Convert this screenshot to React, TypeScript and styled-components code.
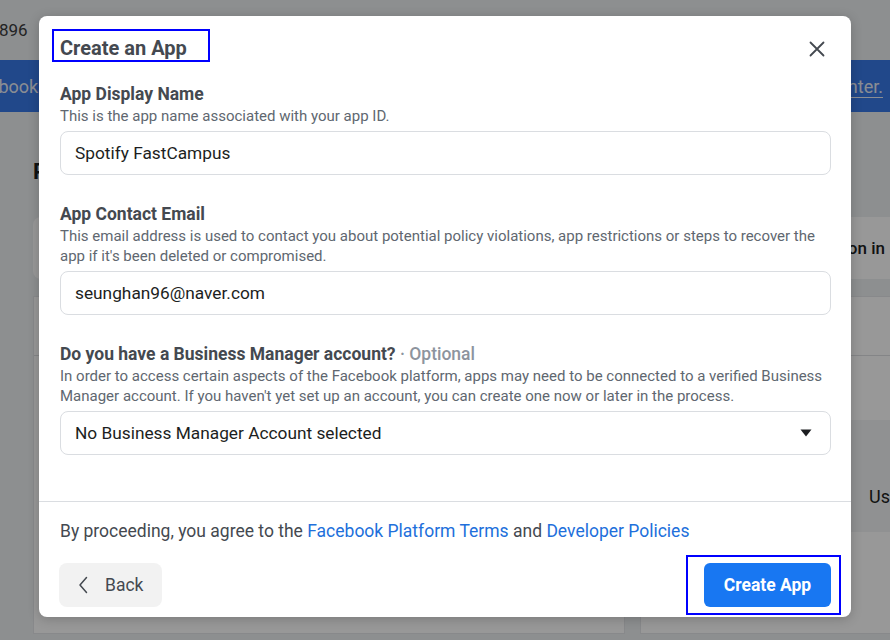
import React from "react";
import styled, { createGlobalStyle } from "styled-components";

const GlobalStyle = createGlobalStyle`
  html, body {
    margin: 0;
    padding: 0;
    width: 890px;
    height: 640px;
    overflow: hidden;
    font-family: Roboto, "Liberation Sans", Arial, sans-serif;
  }
`;

export default function App() {
  return (
    <>
      <GlobalStyle />
      <Screen>
        <Page>
          <TopBar>
            <Counter>896</Counter>
            <Pill />
          </TopBar>
          <Banner>
            <BannerText>Facebook</BannerText>
            <BannerLink>Help Center.</BannerLink>
          </Banner>
          <Content>
            <PageTitle>Products</PageTitle>
            <NoticeCard>
              <NoticeText>Learn more about permission in</NoticeText>
            </NoticeCard>
            <PanelRow>
              <Panel>
                <PanelHead />
                <PanelBody />
              </Panel>
              <Panel>
                <PanelHead />
                <PanelGap />
                <PanelBand>
                  <BandText>Use</BandText>
                </PanelBand>
              </Panel>
            </PanelRow>
          </Content>
        </Page>

        <Overlay />

        <Dialog>
          <Header>
            <Title>Create an App</Title>
            <CloseButton aria-label="Close">
              <svg width="16" height="16" viewBox="0 0 16 16">
                <path
                  d="M1.5 1.5 L14.5 14.5 M14.5 1.5 L1.5 14.5"
                  stroke="#444950"
                  strokeWidth="1.8"
                  strokeLinecap="round"
                />
              </svg>
            </CloseButton>
          </Header>

          <Body>
            <Field>
              <Label>App Display Name</Label>
              <Hint>This is the app name associated with your app ID.</Hint>
              <Input>Spotify FastCampus</Input>
            </Field>

            <Field>
              <Label>App Contact Email</Label>
              <Hint>
                This email address is used to contact you about potential
                policy violations, app restrictions or steps to recover the
                app if it's been deleted or compromised.
              </Hint>
              <Input>seunghan96@naver.com</Input>
            </Field>

            <Field>
              <Label>
                Do you have a Business Manager account?
                <Optional> · Optional</Optional>
              </Label>
              <Hint>
                In order to access certain aspects of the Facebook platform,
                apps may need to be connected to a verified Business Manager
                account. If you haven't yet set up an account, you can create
                one now or later in the process.
              </Hint>
              <Select>
                <span>No Business Manager Account selected</span>
                <svg width="12" height="8" viewBox="0 0 12 8">
                  <path d="M0.5 0.5 H11.5 L6 7.5 Z" fill="#1c1e21" />
                </svg>
              </Select>
            </Field>
          </Body>

          <Footer>
            <Terms>
              By proceeding, you agree to the{" "}
              <Link>Facebook Platform Terms</Link> and{" "}
              <Link>Developer Policies</Link>
            </Terms>
            <Actions>
              <BackButton>
                <svg width="10" height="18" viewBox="0 0 10 18">
                  <path
                    d="M8.5 1.5 L2 9 L8.5 16.5"
                    stroke="#444950"
                    strokeWidth="1.5"
                    fill="none"
                    strokeLinecap="round"
                    strokeLinejoin="round"
                  />
                </svg>
                Back
              </BackButton>
              <PrimaryButton>Create App</PrimaryButton>
            </Actions>
          </Footer>

          <Highlight $top={13} $left={13} $width={158} $height={33} />
          <Highlight $top={539} $left={647} $width={155} $height={60} />
        </Dialog>
      </Screen>
    </>
  );
}

const Screen = styled.div`
  position: relative;
  width: 890px;
  height: 640px;
  overflow: hidden;
  background: #eceef1;
`;

const Page = styled.div`
  display: flex;
  flex-direction: column;
  height: 100%;
`;

const TopBar = styled.div`
  height: 60px;
  display: flex;
  align-items: center;
  gap: 76px;
  background: #eceef1;
`;

const Counter = styled.span`
  margin-left: -1px;
  font-size: 17px;
  color: #3a3b3c;
`;

const Pill = styled.div`
  width: 40px;
  height: 30px;
  margin-top: 28px;
  border-radius: 8px;
  background: #fafafa;
`;

const Banner = styled.div`
  height: 52px;
  background: #3778e6;
  display: flex;
  align-items: center;
  justify-content: space-between;
  overflow: hidden;
  font-size: 18px;
  color: #e6ebf5;
`;

const BannerText = styled.span`
  margin-left: -40px;
`;

const BannerLink = styled.span`
  margin-right: 7px;
  text-decoration: underline;
  text-underline-offset: 4px;
`;

const Content = styled.div`
  flex: 1;
  display: flex;
  flex-direction: column;
  padding: 0 0 0 33px;
`;

const PageTitle = styled.h2`
  margin: 46px 0 0;
  font-size: 22px;
  font-weight: 700;
  color: #1c1e21;
  line-height: 28px;
`;

const NoticeCard = styled.div`
  margin-top: 31px;
  margin-right: -20px;
  height: 62px;
  border-radius: 8px;
  background: #fdfdfd;
  display: flex;
  align-items: center;
  justify-content: flex-end;
  padding-right: 25px;
`;

const NoticeText = styled.span`
  font-size: 17px;
  font-weight: 500;
  color: #1c1e21;
`;

const PanelRow = styled.div`
  margin-top: 17px;
  display: grid;
  grid-template-columns: 592px 1fr;
  gap: 15px;
  height: 338px;
  margin-right: -20px;
`;

const Panel = styled.div`
  background: #fdfdfd;
  border: 1px solid #e3e5e8;
  display: flex;
  flex-direction: column;
`;

const PanelHead = styled.div`
  height: 58px;
  border-bottom: 1px solid #dcdee2;
`;

const PanelBody = styled.div`
  flex: 1;
`;

const PanelGap = styled.div`
  height: 64px;
`;

const PanelBand = styled.div`
  height: 112px;
  box-sizing: border-box;
  background: #f1f2f4;
  display: flex;
  align-items: flex-end;
  padding: 0 0 25px 228px;
`;

const BandText = styled.span`
  font-size: 18px;
  color: #1c1e21;
`;

const Overlay = styled.div`
  position: absolute;
  inset: 0;
  background: rgba(0, 0, 0, 0.4);
`;

const Dialog = styled.div`
  position: absolute;
  top: 16px;
  left: 39px;
  width: 812px;
  height: 601px;
  background: #ffffff;
  border-radius: 8px;
  display: flex;
  flex-direction: column;
  box-shadow: 0 2px 12px rgba(0, 0, 0, 0.2);
`;

const Header = styled.div`
  display: flex;
  align-items: center;
  justify-content: space-between;
  padding: 20px 26px 0 21px;
  height: 24px;
`;

const Title = styled.h1`
  margin: 0;
  font-size: 20px;
  line-height: 24px;
  font-weight: 700;
  color: #444950;
`;

const CloseButton = styled.button`
  border: none;
  background: none;
  padding: 0;
  margin-top: 2px;
  width: 16px;
  height: 16px;
  display: flex;
  cursor: pointer;
`;

const Body = styled.div`
  padding: 24px 20px 0 21px;
  display: flex;
  flex-direction: column;
  gap: 29px;
  height: 441px;
  box-sizing: border-box;
`;

const Field = styled.div`
  display: flex;
  flex-direction: column;
`;

const Label = styled.div`
  font-size: 17.5px;
  line-height: 20px;
  font-weight: 700;
  color: #444950;
  margin-bottom: 2px;
`;

const Optional = styled.span`
  font-weight: 500;
  color: #8d949e;
`;

const Hint = styled.div`
  font-size: 15px;
  line-height: 20px;
  color: #606770;
  margin-bottom: 5px;
`;

const Input = styled.div`
  height: 44px;
  box-sizing: border-box;
  border: 1px solid #dadde1;
  border-radius: 8px;
  padding: 0 14px;
  display: flex;
  align-items: center;
  font-size: 17.3px;
  color: #1c1e21;
`;

const Select = styled(Input)`
  justify-content: space-between;
  padding-right: 18px;
`;

const Footer = styled.div`
  border-top: 1px solid #dadde1;
  padding: 19px 20px 0 21px;
  display: flex;
  flex-direction: column;
  gap: 22px;
`;

const Terms = styled.div`
  font-size: 17.5px;
  line-height: 20px;
  color: #444950;
`;

const Link = styled.a`
  color: #216fdb;
  text-decoration: none;
  cursor: pointer;
`;

const Actions = styled.div`
  display: flex;
  justify-content: space-between;
`;

const BackButton = styled.button`
  height: 44px;
  width: 103px;
  margin-left: -1px;
  border: none;
  border-radius: 8px;
  background: #f2f2f2;
  display: flex;
  align-items: center;
  gap: 17px;
  padding: 0 0 0 19px;
  font-family: inherit;
  font-size: 17.5px;
  color: #444950;
  cursor: pointer;
`;

const PrimaryButton = styled.button`
  height: 44px;
  width: 127px;
  border: none;
  border-radius: 6px;
  background: #1877f2;
  color: #ffffff;
  font-family: inherit;
  font-size: 17.5px;
  font-weight: 700;
  cursor: pointer;
`;

const Highlight = styled.div<{
  $top: number;
  $left: number;
  $width: number;
  $height: number;
}>`
  position: absolute;
  top: ${({ $top }) => $top}px;
  left: ${({ $left }) => $left}px;
  width: ${({ $width }) => $width}px;
  height: ${({ $height }) => $height}px;
  box-sizing: border-box;
  border: 2px solid #0000ff;
  pointer-events: none;
`;
